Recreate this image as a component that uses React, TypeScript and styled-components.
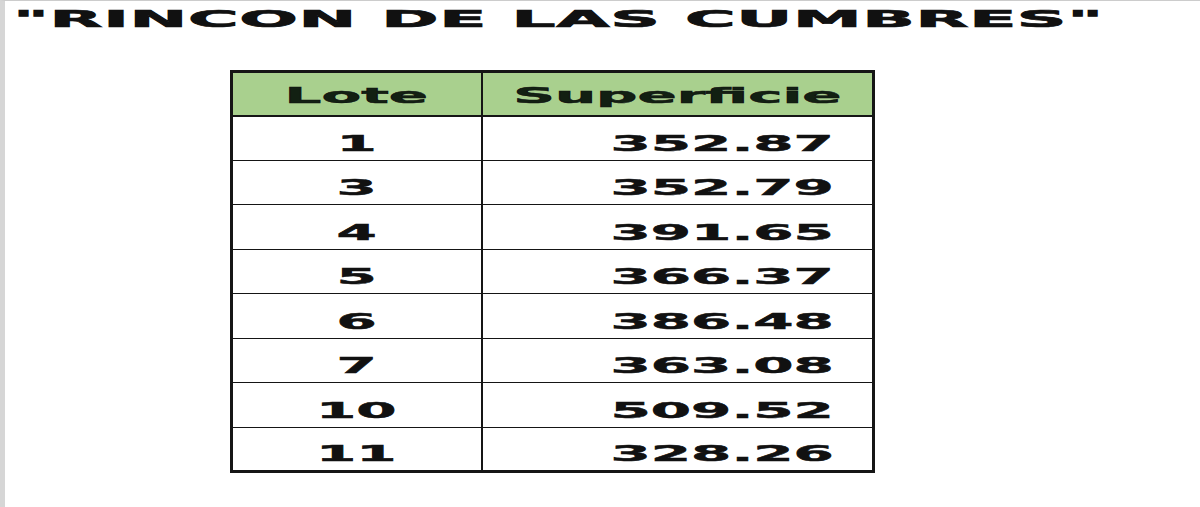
import React from "react";
import styled, { createGlobalStyle } from "styled-components";

const GlobalStyle = createGlobalStyle`
  html, body {
    margin: 0;
    padding: 0;
    background: #ffffff;
  }
  body {
    font-family: "DejaVu Sans", Verdana, sans-serif;
    color: #111111;
  }
`;

const lotes = [
  { lote: "1", superficie: "352.87" },
  { lote: "3", superficie: "352.79" },
  { lote: "4", superficie: "391.65" },
  { lote: "5", superficie: "366.37" },
  { lote: "6", superficie: "386.48" },
  { lote: "7", superficie: "363.08" },
  { lote: "10", superficie: "509.52" },
  { lote: "11", superficie: "328.26" },
];

const Page = styled.div`
  box-sizing: border-box;
  height: 507px;
  border-left: 5px solid #d6d6d6;
  border-top: 1px solid #cccccc;
  padding: 7px 0 0 8px;
  overflow: hidden;
`;

const Title = styled.h1`
  margin: 0;
  height: 23px;
  font-size: 23px;
  line-height: 1;
  font-weight: 700;
  white-space: nowrap;
  -webkit-text-stroke: 0.7px #111111;
`;

const Wide = styled.span<{ $origin?: string; $spacing?: number; $scale?: number }>`
  display: inline-block;
  transform: scaleX(${(p) => p.$scale || 2.63});
  transform-origin: ${(p) => p.$origin || "left"};
  letter-spacing: ${(p) => p.$spacing || 0}px;
  white-space: nowrap;
`;

const Sheet = styled.table`
  margin: 39px 0 0 217px;
  border-collapse: collapse;
  width: 642px;
  table-layout: fixed;
  border: 3px solid #151515;
  font-size: 22px;
  font-weight: 700;
  line-height: 1;
  -webkit-text-stroke: 0.5px #111111;
`;

const HeadCell = styled.th<{ $w: number }>`
  box-sizing: border-box;
  width: ${(p) => p.$w}px;
  height: 44px;
  padding: 0 0 8px;
  background: #a9d08e;
  border: 2px solid #151515;
  border-top-width: 3px;
  text-align: center;
  vertical-align: bottom;
  font-weight: 700;
  color: #122012;
`;

const Cell = styled.td<{ $align: "center" | "right" }>`
  box-sizing: border-box;
  height: 44.5px;
  padding: 0 ${(p) => (p.$align === "right" ? "38px" : "0")} 5px 0;
  border-left: 2.5px solid #151515;
  border-right: 2.5px solid #151515;
  border-bottom: 1.5px solid #151515;
  text-align: ${(p) => p.$align};
  vertical-align: bottom;
`;

export default function App() {
  return (
    <>
      <GlobalStyle />
      <Page>
        <Title>
          <Wide $scale={3} $spacing={0.2}>"RINCON DE LAS CUMBRES"</Wide>
        </Title>
        <Sheet>
          <thead>
            <tr>
              <HeadCell $w={250}>
                <Wide $origin="center">Lote</Wide>
              </HeadCell>
              <HeadCell $w={392}>
                <Wide $origin="center">Superficie</Wide>
              </HeadCell>
            </tr>
          </thead>
          <tbody>
            {lotes.map((row) => (
              <tr key={row.lote}>
                <Cell $align="center">
                  <Wide $origin="center">{row.lote}</Wide>
                </Cell>
                <Cell $align="right">
                  <Wide $origin="right">{row.superficie}</Wide>
                </Cell>
              </tr>
            ))}
          </tbody>
        </Sheet>
      </Page>
    </>
  );
}
